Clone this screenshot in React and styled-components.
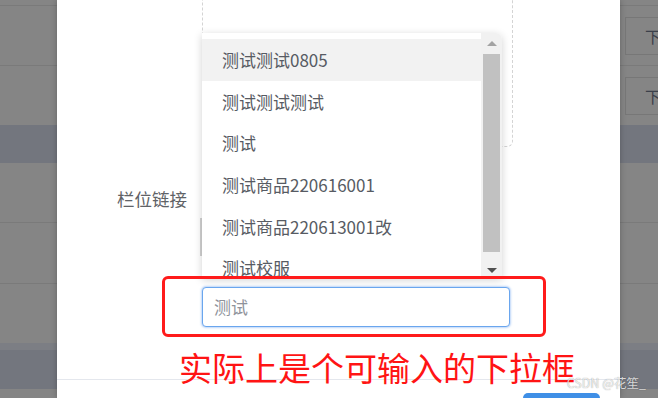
import React from 'react';
import styled, { createGlobalStyle } from 'styled-components';

const GlobalStyle = createGlobalStyle`
  html, body { margin: 0; padding: 0; background: #858585; }
  body { font-family: "Noto Sans CJK SC", "Noto Sans", sans-serif; }
  * { box-sizing: border-box; }
`;

const options = [
    '测试测试0805',
    '测试测试测试',
    '测试',
    '测试商品220616001',
    '测试商品220613001改',
    '测试校服',
];

// rows of the table behind the dimmed overlay
const bgRows = [
    { h: 6, kind: 'plain', line: true },
    { h: 60, kind: 'plain', line: true, btn: true },
    { h: 59, kind: 'plain', btn: true },
    { h: 38, kind: 'band' },
    { h: 60, kind: 'plain', line: true },
    { h: 61, kind: 'plain', line: true },
    { h: 59, kind: 'plain' },
    { h: 7, kind: 'light' },
    { h: 39, kind: 'band' },
    { h: 9, kind: 'plain' },
];

const BackTable = ({ withButtons }) => (
    <>
        {bgRows.map((r, i) => (
            <BgRow key={i} $h={r.h} $kind={r.kind} $line={r.line}>
                {withButtons && r.btn && <GhostButton>下载</GhostButton>}
            </BgRow>
        ))}
    </>
);

const App = () => {
    return (
        <Page>
            <GlobalStyle />
            <Strip $w={57}>
                <BackTable />
            </Strip>

            <Modal>
                <UploadBox />

                <FormRow>
                    <Label>栏位链接</Label>
                </FormRow>
                <HiddenField />

                <Annotation>
                    <SearchInput placeholder="测试" />
                </Annotation>

                <Footer>
                    <PrimaryButton />
                </Footer>

                <Dropdown>
                    <OptionList>
                        {options.map((o, i) => (
                            <Option key={o} $active={i === 0}>{o}</Option>
                        ))}
                    </OptionList>
                    <Scrollbar>
                        <ArrowBox><ArrowUp /></ArrowBox>
                        <Thumb />
                        <ArrowBox $bottom><ArrowDown /></ArrowBox>
                    </Scrollbar>
                </Dropdown>

                <Note>实际上是个可输入的下拉框</Note>
            </Modal>

            <Strip $w={38}>
                <BackTable withButtons />
            </Strip>

            <Watermark>CSDN @花笙_</Watermark>
        </Page>
    );
};

export default App;

const Page = styled.div`
  position: relative;
  display: flex;
  width: 658px; height: 398px;
  overflow: hidden;
`;

const Strip = styled.div`
  width: ${({ $w }) => $w}px;
  flex-shrink: 0;
  display: flex; flex-direction: column;
  background: #858585;
  overflow: hidden;
`;

const BgRow = styled.div`
  height: ${({ $h }) => $h}px;
  flex-shrink: 0;
  display: flex; align-items: center;
  padding-left: 5px;
  background: ${({ $kind }) => $kind === 'band' ? '#73767e' : $kind === 'light' ? '#7c7e84' : '#858585'};
  border-bottom: ${({ $line }) => $line ? '1px solid #7a7a7a' : 'none'};
`;

const GhostButton = styled.div`
  flex-shrink: 0;
  width: 80px; height: 38px;
  border: 1px solid #777;
  display: flex; align-items: center;
  padding-left: 19px;
  font-size: 16px;
  color: #3b404a;
`;

const Modal = styled.div`
  position: relative;
  width: 563px;
  flex-shrink: 0;
  display: flex; flex-direction: column;
  background: #fff;
  box-shadow: 0 0 6px rgba(0,0,0,0.25);
  overflow: hidden;
  z-index: 1;
  & > * { flex-shrink: 0; }
`;

const UploadBox = styled.div`
  margin: -12px 0 0 145px;
  width: 311px; height: 159px;
  border: 1px dashed #d4d4d4;
  border-radius: 6px;
`;

const FormRow = styled.div`
  display: flex; align-items: center;
  height: 40px;
  margin-top: 31px;
`;

const Label = styled.label`
  width: 145px;
  padding-right: 15px;
  text-align: right;
  font-size: 17.5px;
  color: #606266;
`;

const HiddenField = styled.div`
  margin-left: 143px;
  width: 300px; height: 38px;
  border-left: 2px solid #d2d2d2;
`;

const Annotation = styled.div`
  position: relative;
  z-index: 3;
  display: flex; align-items: center;
  margin: 20px 0 0 105px;
  width: 384px; height: 61px;
  padding-left: 37px;
  border: 3px solid #ff1b1b;
  border-radius: 6px;
`;

const SearchInput = styled.input`
  width: 308px; height: 40px;
  padding: 0 11px;
  border: 1px solid #6aa6ee;
  border-radius: 4px;
  box-shadow: 0 0 2px 1px rgba(110,165,240,0.45);
  outline: none;
  font-family: "Noto Sans CJK SC", sans-serif;
  font-size: 17px;
  color: #606266;
  &::placeholder { color: #8f939b; }
`;

const Footer = styled.div`
  display: flex; justify-content: flex-end;
  margin-top: 42px;
  padding: 13px 20px 0 0;
  border-top: 1px solid #e4e7ed;
`;

const PrimaryButton = styled.div`
  width: 77px; height: 32px;
  border-radius: 5px;
  background: #3f8fe6;
`;

const Dropdown = styled.div`
  position: absolute;
  left: 145px; top: 33px;
  z-index: 2;
  display: flex;
  width: 300px; height: 245px;
  background: #fff;
  border-radius: 0 6px 0 0;
  box-shadow: 0 2px 8px rgba(0,0,0,0.18);
  overflow: hidden;
`;

const OptionList = styled.div`
  flex: 1;
  padding-top: 6px;
`;

const Option = styled.div`
  height: 41.6px;
  display: flex; align-items: center;
  padding-left: 20px;
  font-size: 17px;
  color: #575b63;
  white-space: nowrap;
  background: ${({ $active }) => $active ? '#f2f2f2' : 'transparent'};
`;

const Scrollbar = styled.div`
  width: 21px;
  display: flex; flex-direction: column;
  background: #f1f1f1;
`;

const ArrowBox = styled.div`
  height: ${({ $bottom }) => $bottom ? '26px' : '21px'};
  display: flex; justify-content: center;
  align-items: ${({ $bottom }) => $bottom ? 'flex-start' : 'center'};
  padding-top: ${({ $bottom }) => $bottom ? '16px' : '0'};
`;

const ArrowUp = styled.div`
  width: 0; height: 0;
  border-left: 5px solid transparent;
  border-right: 5px solid transparent;
  border-bottom: 5px solid #a3a3a3;
`;

const ArrowDown = styled.div`
  width: 0; height: 0;
  border-left: 5px solid transparent;
  border-right: 5px solid transparent;
  border-top: 5px solid #505050;
`;

const Thumb = styled.div`
  flex: 1;
  margin: 0 2px;
  background: #c1c1c1;
`;

const Note = styled.div`
  position: absolute;
  left: 122px; top: 351px;
  z-index: 3;
  font-size: 33px;
  line-height: 1;
  color: #ff1414;
  white-space: nowrap;
`;

const Watermark = styled.div`
  position: absolute;
  right: 12px; bottom: 6px;
  z-index: 4;
  font-family: "Noto Sans CJK SC", sans-serif;
  font-size: 12.5px;
  color: rgba(255,255,255,0.8);
  text-shadow: 0 0 1px rgba(0,0,0,0.45);
`;
